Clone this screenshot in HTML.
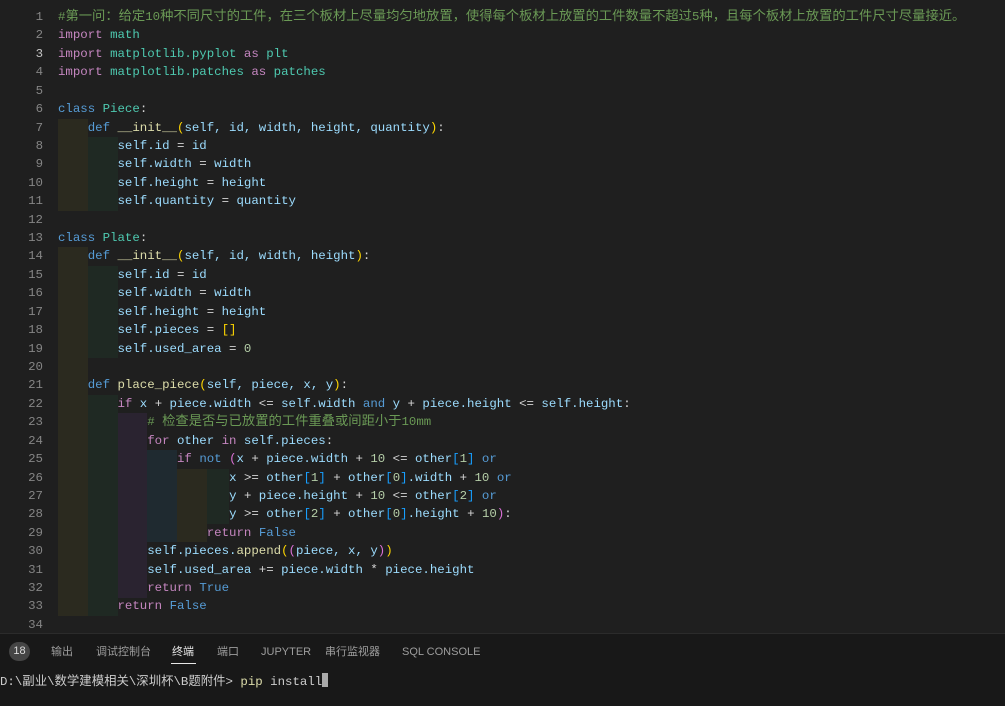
<!DOCTYPE html>
<html><head><meta charset="utf-8"><style>
body{margin:0;width:1005px;height:705px;background:#1f1f1f;overflow:hidden;position:relative;font-family:"Liberation Mono","Noto Sans CJK SC",monospace;font-size:12.4px;color:#9cdcfe}
.ln{position:absolute;left:0;width:43px;text-align:right;color:#858585;height:18.42px;line-height:18.42px}
.l{position:absolute;left:58px;height:18.42px;line-height:18.42px;white-space:pre}
.a,.b,.c,.d{display:inline-block;height:18.5px;vertical-align:top}
.a{background:#2b2a1f}.b{background:#1f2923}.c{background:#2a2330}.d{background:#1f2a30}
.k{color:#569cd6}.p{color:#c586c0}.f{color:#dcdcaa}.t{color:#4ec9b0}.cm{color:#6a9955}.n{color:#b5cea8}.o{color:#d4d4d4}.y{color:#ffd700}.m{color:#da70d6}.z{color:#179fff}
.cj{font-size:13.3px}
#panel{position:absolute;left:0;top:633px;width:1005px;height:72px;background:#181818;border-top:1px solid #2b2b2b;font-family:"Liberation Sans","Noto Sans CJK SC",sans-serif}
.tab{position:absolute;top:10px;height:16px;line-height:16px;font-size:11px;color:#9d9d9d}
</style></head><body>
<div id="code"></div>
<script>
const L=[
'<span class="cm">#第一问：给定10种不同尺寸的工件，在三个板材上尽量均匀地放置，使得每个板材上放置的工件数量不超过5种，且每个板材上放置的工件尺寸尽量接近。</span>',
'<span class="p">import</span> <span class="t">math</span>',
'<span class="p">import</span> <span class="t">matplotlib.pyplot</span> <span class="p">as</span> <span class="t">plt</span>',
'<span class="p">import</span> <span class="t">matplotlib.patches</span> <span class="p">as</span> <span class="t">patches</span>',
'',
'<span class="k">class</span> <span class="t">Piece</span><span class="o">:</span>',
'A<span class="k">def</span> <span class="f">__init__</span><span class="y">(</span>self, id, width, height, quantity<span class="y">)</span><span class="o">:</span>',
'AB<span>self.id</span> <span class="o">=</span> id',
'ABself.width <span class="o">=</span> width',
'ABself.height <span class="o">=</span> height',
'ABself.quantity <span class="o">=</span> quantity',
'',
'<span class="k">class</span> <span class="t">Plate</span><span class="o">:</span>',
'A<span class="k">def</span> <span class="f">__init__</span><span class="y">(</span>self, id, width, height<span class="y">)</span><span class="o">:</span>',
'ABself.id <span class="o">=</span> id',
'ABself.width <span class="o">=</span> width',
'ABself.height <span class="o">=</span> height',
'ABself.pieces <span class="o">=</span> <span class="y">[]</span>',
'ABself.used_area <span class="o">=</span> <span class="n">0</span>',
'A',
'A<span class="k">def</span> <span class="f">place_piece</span><span class="y">(</span>self, piece, x, y<span class="y">)</span><span class="o">:</span>',
'AB<span class="p">if</span> x <span class="o">+</span> piece.width <span class="o">&lt;=</span> self.width <span class="k">and</span> y <span class="o">+</span> piece.height <span class="o">&lt;=</span> self.height<span class="o">:</span>',
'ABC<span class="cm"># 检查是否与已放置的工件重叠或间距小于10mm</span>',
'ABC<span class="p">for</span> other <span class="p">in</span> self.pieces<span class="o">:</span>',
'ABCD<span class="p">if</span> <span class="k">not</span> <span class="m">(</span>x <span class="o">+</span> piece.width <span class="o">+</span> <span class="n">10</span> <span class="o">&lt;=</span> other<span class="z">[</span><span class="n">1</span><span class="z">]</span> <span class="k">or</span>',
'ABCDEFx <span class="o">&gt;=</span> other<span class="z">[</span><span class="n">1</span><span class="z">]</span> <span class="o">+</span> other<span class="z">[</span><span class="n">0</span><span class="z">]</span>.width <span class="o">+</span> <span class="n">10</span> <span class="k">or</span>',
'ABCDEFy <span class="o">+</span> piece.height <span class="o">+</span> <span class="n">10</span> <span class="o">&lt;=</span> other<span class="z">[</span><span class="n">2</span><span class="z">]</span> <span class="k">or</span>',
'ABCDEFy <span class="o">&gt;=</span> other<span class="z">[</span><span class="n">2</span><span class="z">]</span> <span class="o">+</span> other<span class="z">[</span><span class="n">0</span><span class="z">]</span>.height <span class="o">+</span> <span class="n">10</span><span class="m">)</span><span class="o">:</span>',
'ABCDE<span class="p">return</span> <span class="k">False</span>',
'ABCself.pieces.<span class="f">append</span><span class="y">(</span><span class="m">(</span>piece, x, y<span class="m">)</span><span class="y">)</span>',
'ABCself.used_area <span class="o">+=</span> piece.width <span class="o">*</span> piece.height',
'ABC<span class="p">return</span> <span class="k">True</span>',
'AB<span class="p">return</span> <span class="k">False</span>',
''
];
const M={A:'<span class="a">    </span>',B:'<span class="b">    </span>',C:'<span class="c">    </span>',D:'<span class="d">    </span>',E:'<span class="a">    </span>',F:'<span class="b">   </span>'};
let h='';
L.forEach((s,i)=>{
 let j=0,pre='';while(j<s.length&&'ABCDEF'.includes(s[j])){pre+=M[s[j]];j++;}
 let rest=s.slice(j).replace(/([\u3000-\u9fff\uff00-\uffef]+)/g,'<span class="cj">$1</span>');
 const top=8+i*18.42;
 h+=`<div class="ln" style="top:${top}px;${i==2?'color:#c6c6c6':''}">${i+1}</div><div class="l" style="top:${top}px">${pre}${rest}</div>`;
});
document.getElementById('code').innerHTML=h;
</script>
<div id="panel">
<div style="position:absolute;left:9px;top:8px;width:21px;height:19px;border-radius:10px;background:#454545;color:#ddd;font-size:11px;text-align:center;line-height:19px">18</div>
<div class="tab" style="left:51px">输出</div>
<div class="tab" style="left:96px">调试控制台</div>
<div class="tab" style="left:172px;color:#e7e7e7">终端</div>
<div style="position:absolute;left:171px;top:29px;width:25px;height:1px;background:#e7e7e7"></div>
<div class="tab" style="left:217px">端口</div>
<div class="tab" style="left:261px">JUPYTER</div>
<div class="tab" style="left:325px">串行监视器</div>
<div class="tab" style="left:402px">SQL CONSOLE</div>
<div style="position:absolute;left:0;top:37px;font-size:12.4px;color:#cccccc;white-space:pre;font-family:'Liberation Mono','Noto Sans CJK SC',monospace">D:\副业\数学建模相关\深圳杯\B题附件&gt; <span style="color:#dcdcaa">pip</span> install<span style="display:inline-block;width:6px;height:14px;background:#aaa;vertical-align:-2px"></span></div>
</div>
</body></html>
